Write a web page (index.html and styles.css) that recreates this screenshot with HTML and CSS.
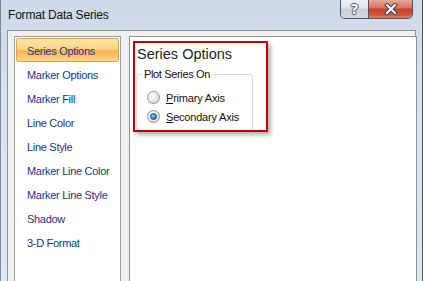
FILE: index.html
```html
<!DOCTYPE html>
<html>
<head>
<title>Format Data Series</title>
<link rel="stylesheet" href="styles.css">
</head>
<body>

  <div class="window">
    <div class="titlebar">
      <span class="title">Format Data Series</span>
      <div class="caption-buttons">
        <button class="btn-help">?</button>
        <button class="btn-close">
          <svg width="14" height="12" viewBox="0 0 14 12">
            <path d="M3 2 L11 10 M11 2 L3 10" stroke="#3a3f47" stroke-width="4.2" stroke-linecap="square"/>
            <path d="M3 2 L11 10 M11 2 L3 10" stroke="#fff" stroke-width="2.2" stroke-linecap="square"/>
          </svg>
        </button>
      </div>
    </div>

    <div class="client">
      <ul class="nav">
        <li class="active">Series Options</li>
        <li>Marker Options</li>
        <li>Marker Fill</li>
        <li>Line Color</li>
        <li>Line Style</li>
        <li>Marker Line Color</li>
        <li>Marker Line Style</li>
        <li>Shadow</li>
        <li>3-D Format</li>
      </ul>

      <div class="panel">
        <div class="highlight">
          <h2>Series Options</h2>
          <fieldset class="group">
            <legend>Plot Series On</legend>
            <label class="radio"><span class="dot"></span><span><u>P</u>rimary Axis</span></label>
            <label class="radio"><span class="dot checked"></span><span><u>S</u>econdary Axis</span></label>
          </fieldset>
        </div>
      </div>
    </div>
  </div>

</body>
</html>
```

FILE: styles.css
```css
body {
  margin: 0;
  padding: 0;
  width: 423px;
  height: 281px;
  overflow: hidden;
  font-family: "Liberation Sans", Arial, sans-serif;
  color: #1a1a1a;
}

.window {
  width: 423px;
  height: 281px;
  box-sizing: border-box;
  border-left: 1px solid #7d8995;
  border-right: 1px solid #4a525c;
  background: linear-gradient(to bottom, #cddae7, #d9e3ee 40%, #dfe7f0);
  display: flex;
  flex-direction: column;
  overflow: hidden;
}

.titlebar {
  height: 30px;
  flex-shrink: 0;
  display: flex;
  justify-content: space-between;
  align-items: flex-start;
  padding: 0 9px 0 7px;
}

.title {
  margin-top: 8px;
  font-size: 12px;
  line-height: 15px;
  letter-spacing: -0.2px;
  color: #111;
}

.caption-buttons {
  display: flex;
  border: 1px solid #4b5663;
  border-top: none;
  border-radius: 0 0 5px 5px;
  overflow: hidden;
  height: 18px;
}

.caption-buttons button {
  border: none;
  margin: 0;
  padding: 0;
  height: 18px;
  display: flex;
  align-items: center;
  justify-content: center;
}

.btn-help {
  width: 28px;
  border-right: 1px solid #4b5663 !important;
  background: linear-gradient(to bottom, #eef1f5, #dfe4ea 45%, #c8d0d9 50%, #d3dae2);
  font-family: "DejaVu Sans", sans-serif;
  font-weight: bold;
  font-size: 14px;
  color: #fff;
  text-shadow: 1px 0 0 #4d5560, -1px 0 0 #4d5560, 0 1px 0 #4d5560, 0 -1px 0 #4d5560;
}

.btn-close {
  width: 43px;
  background: linear-gradient(to bottom, #e8a899, #d9705d 45%, #c7402a 50%, #cf5a40 85%, #e08a6c);
}

.client {
  flex: 1;
  display: flex;
  gap: 8px;
  align-items: flex-start;
  margin: 0 6px;
  background-color: #f0f0f0;
  border: 1px solid #8b96a3;
  border-bottom: none;
  padding: 5px 6px 0 6px;
}

.nav {
  list-style: none;
  margin: 0;
  padding: 1px;
  width: 103px;
  height: 260px;
  background-color: #fff;
  border: 1px solid #9a9ea4;
  flex-shrink: 0;
}

.nav li {
  box-sizing: border-box;
  height: 24px;
  line-height: 24px;
  padding-left: 10px;
  font-size: 11px;
  letter-spacing: -0.3px;
  color: #18358a;
  border: 1px solid transparent;
  border-radius: 2px;
}

.nav li.active {
  background: linear-gradient(to bottom, #fee4a8, #fdd38b 45%, #fbb44f 55%, #fcc66a 80%, #fdd88e);
  border-color: #e5a545;
}

.panel {
  width: 280px;
  height: 260px;
  background-color: #fff;
  border: 1px solid #8e9298;
  padding: 4px 3px;
  flex-shrink: 0;
}

.highlight {
  width: 135px;
  height: 91px;
  box-sizing: border-box;
  border: 2px solid #bf0000;
  box-shadow: 3px 3px 4px rgba(0, 0, 0, 0.3);
  overflow: hidden;
}

.highlight h2 {
  margin: 2px 0 5px 2px;
  font-size: 14.5px;
  font-weight: normal;
  line-height: 18px;
  color: #1e1e1e;
}

.group {
  margin: 0 0 0 1px;
  width: 117px;
  box-sizing: border-box;
  padding: 0 0 20px 5px;
  border: 1px solid #d3dbe2;
  border-radius: 3px;
}

.group legend {
  padding: 0 2px;
  font-size: 11px;
  line-height: 13px;
  letter-spacing: -0.35px;
  color: #111;
}

.radio {
  display: flex;
  align-items: center;
  gap: 6px;
  height: 19px;
  margin-left: 5px;
  font-size: 11px;
  letter-spacing: -0.2px;
  color: #111;
}

.radio:first-of-type {
  margin-top: 7px;
}

.dot {
  width: 11px;
  height: 11px;
  border-radius: 50%;
  border: 1px solid #8f9296;
  background: radial-gradient(circle at 40% 35%, #fff, #e6e6e6 50%, #cfd0d2);
  display: flex;
  align-items: center;
  justify-content: center;
}

.dot.checked::after {
  content: "";
  width: 5px;
  height: 5px;
  border-radius: 50%;
  border: 1px solid #1e4f7c;
  background: radial-gradient(circle at 40% 35%, #8fd0f5, #2b7fc0 60%, #1a4f86);
}
```
